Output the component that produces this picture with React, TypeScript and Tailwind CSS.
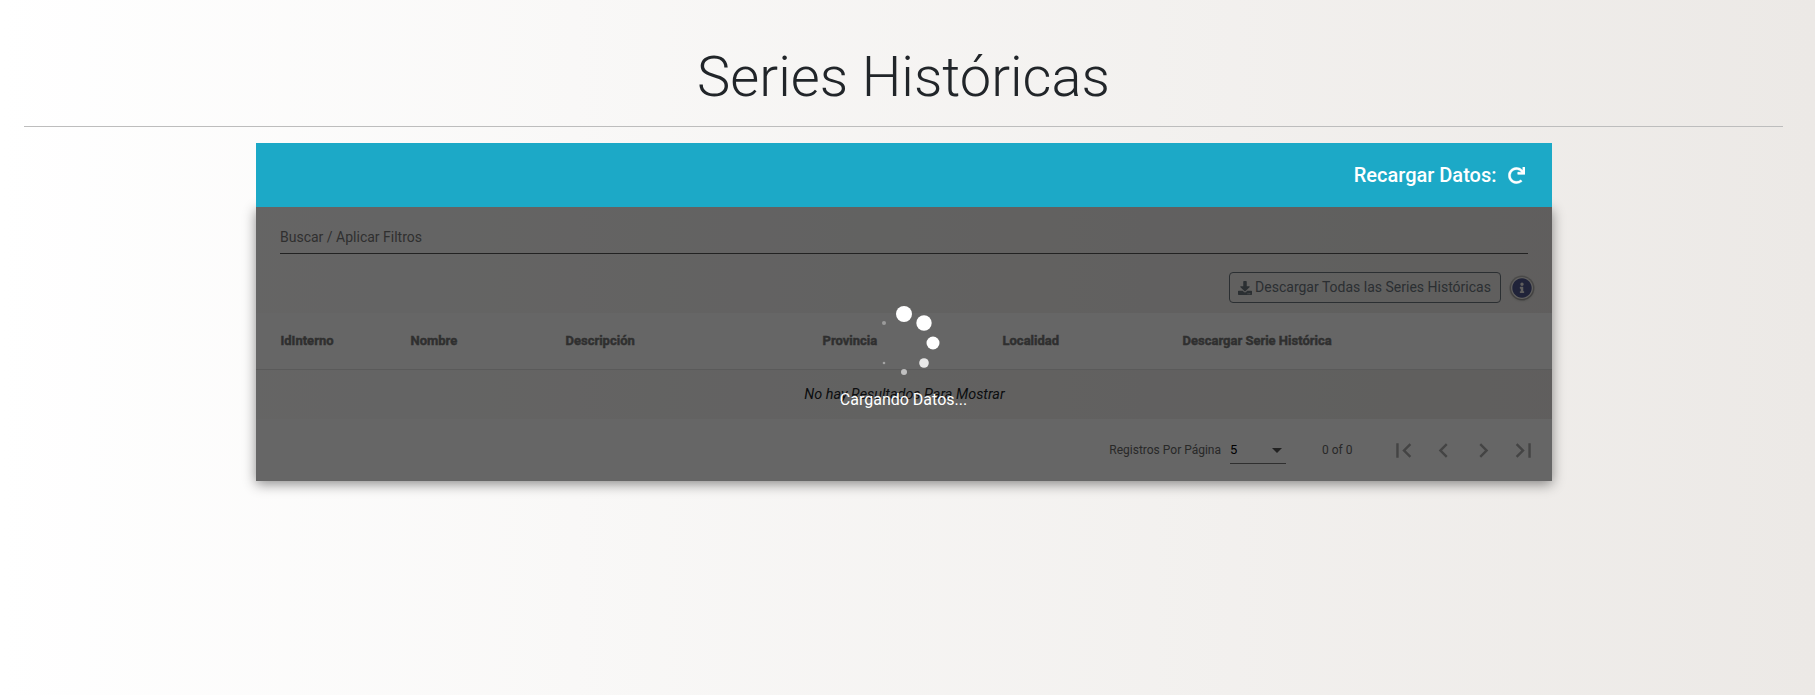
import React from "react";
import { FaDownload, FaInfoCircle, FaRedo } from "react-icons/fa";

const columns = [
  { label: "IdInterno", w: "w-[130px]" },
  { label: "Nombre", w: "w-[155px]" },
  { label: "Descripción", w: "w-[257px]" },
  { label: "Provincia", w: "w-[180px]" },
  { label: "Localidad", w: "w-[180px]" },
  { label: "Descargar Serie Histórica", w: "flex-1" },
];

const pagers = [
  "M18.41 16.59L13.82 12l4.59-4.59L17 6l-6 6 6 6zM6 6h2v12H6z",
  "M15.41 7.41L14 6l-6 6 6 6 1.41-1.41L10.83 12z",
  "M10 6L8.59 7.41 13.17 12l-4.58 4.59L10 18l6-6z",
  "M5.59 7.41L10.18 12l-4.59 4.59L7 18l6-6-6-6zM16 6h2v12h-2z",
];

const dots = [
  { cx: 48, cy: 18, r: 8, o: 1 },
  { cx: 68, cy: 27, r: 7.7, o: 1 },
  { cx: 77, cy: 47, r: 6.5, o: 1 },
  { cx: 68, cy: 67, r: 4.8, o: 0.85 },
  { cx: 48, cy: 76, r: 3, o: 0.6 },
  { cx: 28, cy: 67, r: 1.3, o: 0.4 },
  { cx: 28, cy: 27, r: 2, o: 0.35 },
];

export default function App() {
  return (
    <div className="h-[695px] overflow-hidden bg-gradient-to-r from-white to-[#ece9e6] font-['Roboto',sans-serif] text-[#212529]">
      <div className="w-[1807px]">
        <div className="px-6 pt-[44px]">
          <h1 className="h-[67px] text-center text-[56px] font-light leading-[1.2]">Series Históricas</h1>
          <hr className="mt-[15px] border-0 border-t border-[#bdbdbd]" />
        </div>
        <div className="mx-auto mt-4 w-[1296px]">
          <div className="relative z-20 flex h-16 items-center justify-end bg-[#1ca9c7] pr-[27px] text-white">
            <span className="text-[20px] font-medium">Recargar Datos:</span>
            <FaRedo className="ml-[11px] h-[17px] w-[17px] stroke-white stroke-[8]" />
          </div>
          <div className="relative shadow-[0_3px_12px_rgba(0,0,0,0.45)]">
            <div className="flex h-[106px] flex-col pl-[24.5px] pr-6 pt-[21px]">
              <div className="flex h-[26px] items-start border-b border-[#555] text-[14px] leading-[18px] text-[#777]">Buscar / Aplicar Filtros</div>
              <div className="mt-[18px] flex h-[31px] items-center justify-end">
                <button className="flex h-[31px] w-[272px] items-center justify-center gap-[3px] rounded-[4px] border border-[#6c757d] text-[14px] text-[#6c757d]">
                  <FaDownload className="h-[14px] w-[14px]" />
                  Descargar Todas las Series Históricas
                </button>
                <span className="ml-[10px] -mr-[5px] flex h-[22px] w-[22px] items-center justify-center rounded-full shadow-[0_0_0_1.5px_rgba(0,0,0,0.2),0_1px_3px_rgba(0,0,0,0.3)]">
                  <FaInfoCircle className="h-[20px] w-[20px] text-[#50588f]" />
                </span>
              </div>
            </div>
            <div className="flex h-[57px] items-center border-b border-[#e0e0e0] bg-white pl-[25px] text-[13px] font-bold text-[#777] [-webkit-text-stroke:0.45px_#777]">
              {columns.map((c) => (
                <div key={c.label} className={c.w}>{c.label}</div>
              ))}
            </div>
            <div className="flex h-[49px] items-center justify-center pl-[2px] text-[14.4px] italic text-[#212529]">
              <span>No hay Resultados Para Mostrar</span>
            </div>
            <div className="flex h-[62px] items-center justify-end bg-white pr-[14px] text-[12px] text-[#666]">
              <span>Registros Por Página</span>
              <div className="relative ml-[9px] flex h-[28px] w-[56px] items-center border-b border-[#777] text-[13px]">
                <span className="text-[#000]">5</span>
                <svg viewBox="0 0 10 5" className="absolute right-[4px] top-[12px] h-[5px] w-[10px]"><path d="M0 0l5 5 5-5z" fill="#555" /></svg>
              </div>
              <span className="ml-[36px] mr-[36px]">0 of 0</span>
              <div className="flex gap-[11px]">
                {pagers.map((d) => (
                  <svg key={d} viewBox="0 0 24 24" className="h-[29px] w-[29px]" fill="#aaa"><path d={d} /></svg>
                ))}
              </div>
            </div>
            <div className="absolute inset-0 z-10 bg-[rgba(0,0,0,0.6)]" />
            <div className="absolute left-0 right-0 top-[89px] z-10 flex flex-col items-center text-white">
              <svg viewBox="0 0 96 96" className="h-24 w-24">
                {dots.map((d) => (
                  <circle key={d.cx + "-" + d.cy} cx={d.cx} cy={d.cy} r={d.r} fill="#fff" opacity={d.o} />
                ))}
              </svg>
              <span className="-mt-[2px] text-[16px] leading-5">Cargando Datos...</span>
            </div>
          </div>
        </div>
      </div>
    </div>
  );
}
